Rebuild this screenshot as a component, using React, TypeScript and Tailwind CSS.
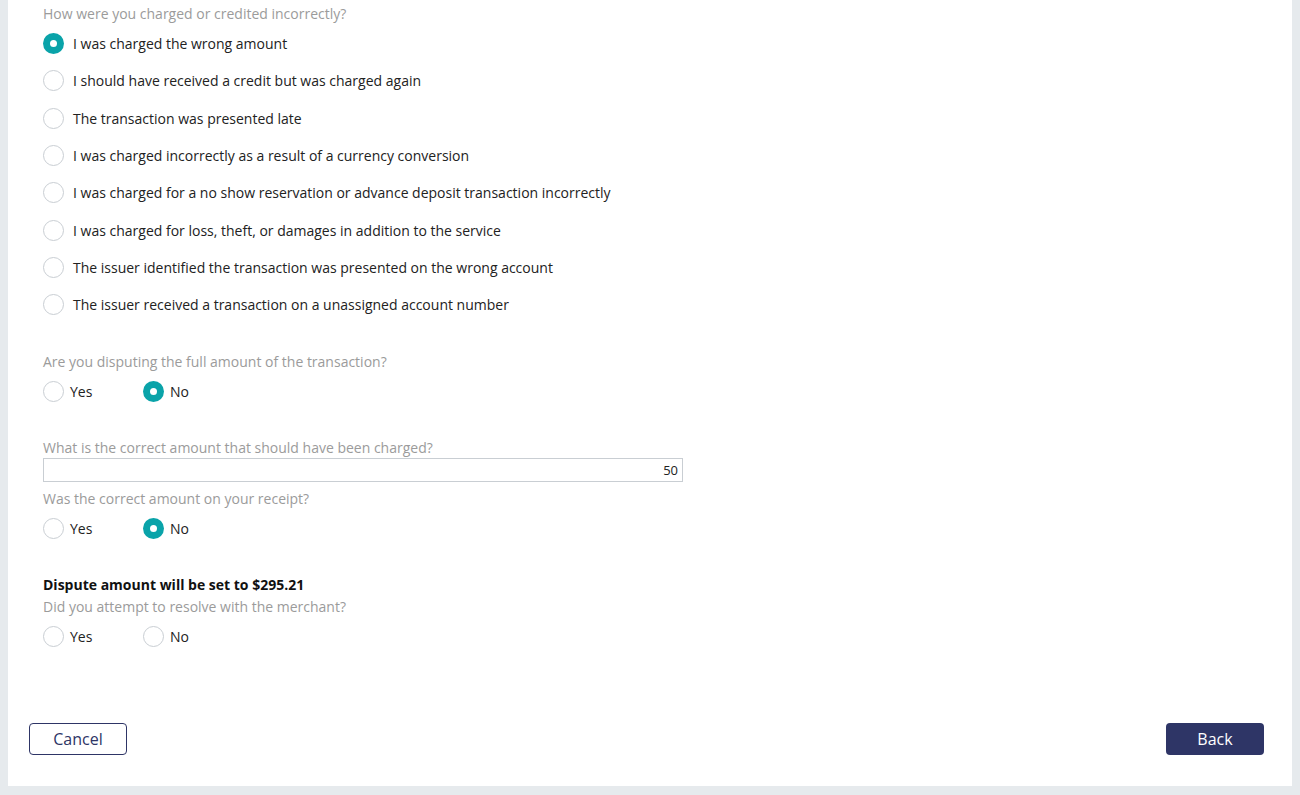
import { useState } from 'react';

const reasons = [
  'I was charged the wrong amount',
  'I should have received a credit but was charged again',
  'The transaction was presented late',
  'I was charged incorrectly as a result of a currency conversion',
  'I was charged for a no show reservation or advance deposit transaction incorrectly',
  'I was charged for loss, theft, or damages in addition to the service',
  'The issuer identified the transaction was presented on the wrong account',
  'The issuer received a transaction on a unassigned account number',
];

const Radio = ({ checked }: { checked: boolean }) =>
  checked ? (
    <span className="flex items-center justify-center w-[21px] h-[21px] rounded-full bg-[#0aa3a9] shrink-0">
      <span className="w-[7px] h-[7px] rounded-full bg-white" />
    </span>
  ) : (
    <span className="w-[21px] h-[21px] rounded-full border border-[#c9ced3] bg-white shrink-0" />
  );

const Label = ({ children, className = '' }: { children: React.ReactNode; className?: string }) => (
  <div className={`text-[14px] leading-[20px] text-[#9b9b9b] ${className}`}>{children}</div>
);

const YesNo = ({ value, onChange }: { value: string | null; onChange: (v: string) => void }) => (
  <div className="flex items-center h-[38px]">
    {['Yes', 'No'].map((opt) => (
      <button
        key={opt}
        type="button"
        onClick={() => onChange(opt)}
        className="flex items-center gap-[6px] w-[100px] text-[14px] text-[#222]"
      >
        <Radio checked={value === opt} />
        <span>{opt}</span>
      </button>
    ))}
  </div>
);

export default function App() {
  const [reason, setReason] = useState(0);
  const [full, setFull] = useState<string | null>('No');
  const [receipt, setReceipt] = useState<string | null>('No');
  const [resolve, setResolve] = useState<string | null>(null);
  const [amount, setAmount] = useState('50');

  return (
    <div
      className="w-[1300px] h-[795px] bg-[#e6eaed] pl-[8px] pr-[8px] pb-[9px]"
      style={{ fontFamily: '"Open Sans", "Liberation Sans", sans-serif' }}
    >
      <div className="flex flex-col h-full bg-white">
        <div className="pl-[35px]">
          <Label className="mt-[4px]">How were you charged or credited incorrectly?</Label>
          <div className="mt-[1px] flex flex-col">
            {reasons.map((r, i) => (
              <button
                key={r}
                type="button"
                onClick={() => setReason(i)}
                className="flex items-center gap-[9px] h-[37.3px] text-[14px] text-[#222] text-left"
              >
                <Radio checked={reason === i} />
                <span>{r}</span>
              </button>
            ))}
          </div>

          <Label className="mt-[29px]">Are you disputing the full amount of the transaction?</Label>
          <YesNo value={full} onChange={setFull} />

          <Label className="mt-[28px]">What is the correct amount that should have been charged?</Label>
          <input
            value={amount}
            onChange={(e) => setAmount(e.target.value)}
            className="block w-[640px] h-[24px] border border-[#c9ced3] text-right pr-[4px] text-[13px] text-[#222] outline-none"
          />
          <Label className="mt-[7px]">Was the correct amount on your receipt?</Label>
          <YesNo value={receipt} onChange={setReceipt} />

          <div className="mt-[28px] text-[14px] leading-[20px] font-bold text-[#111]">
            Dispute amount will be set to $295.21
          </div>
          <Label className="mt-[2px]">Did you attempt to resolve with the merchant?</Label>
          <YesNo value={resolve} onChange={setResolve} />
        </div>

        <div className="flex justify-between items-center pl-[21px] pr-[28px] mt-auto mb-[31px]">
          <button
            type="button"
            className="w-[98px] h-[32px] rounded-[4px] border border-[#2e3566] text-[#2e3566] text-[16px] bg-white"
          >
            Cancel
          </button>
          <button
            type="button"
            className="w-[98px] h-[32px] rounded-[4px] bg-[#2e3566] text-white text-[16px]"
          >
            Back
          </button>
        </div>
      </div>
    </div>
  );
}
